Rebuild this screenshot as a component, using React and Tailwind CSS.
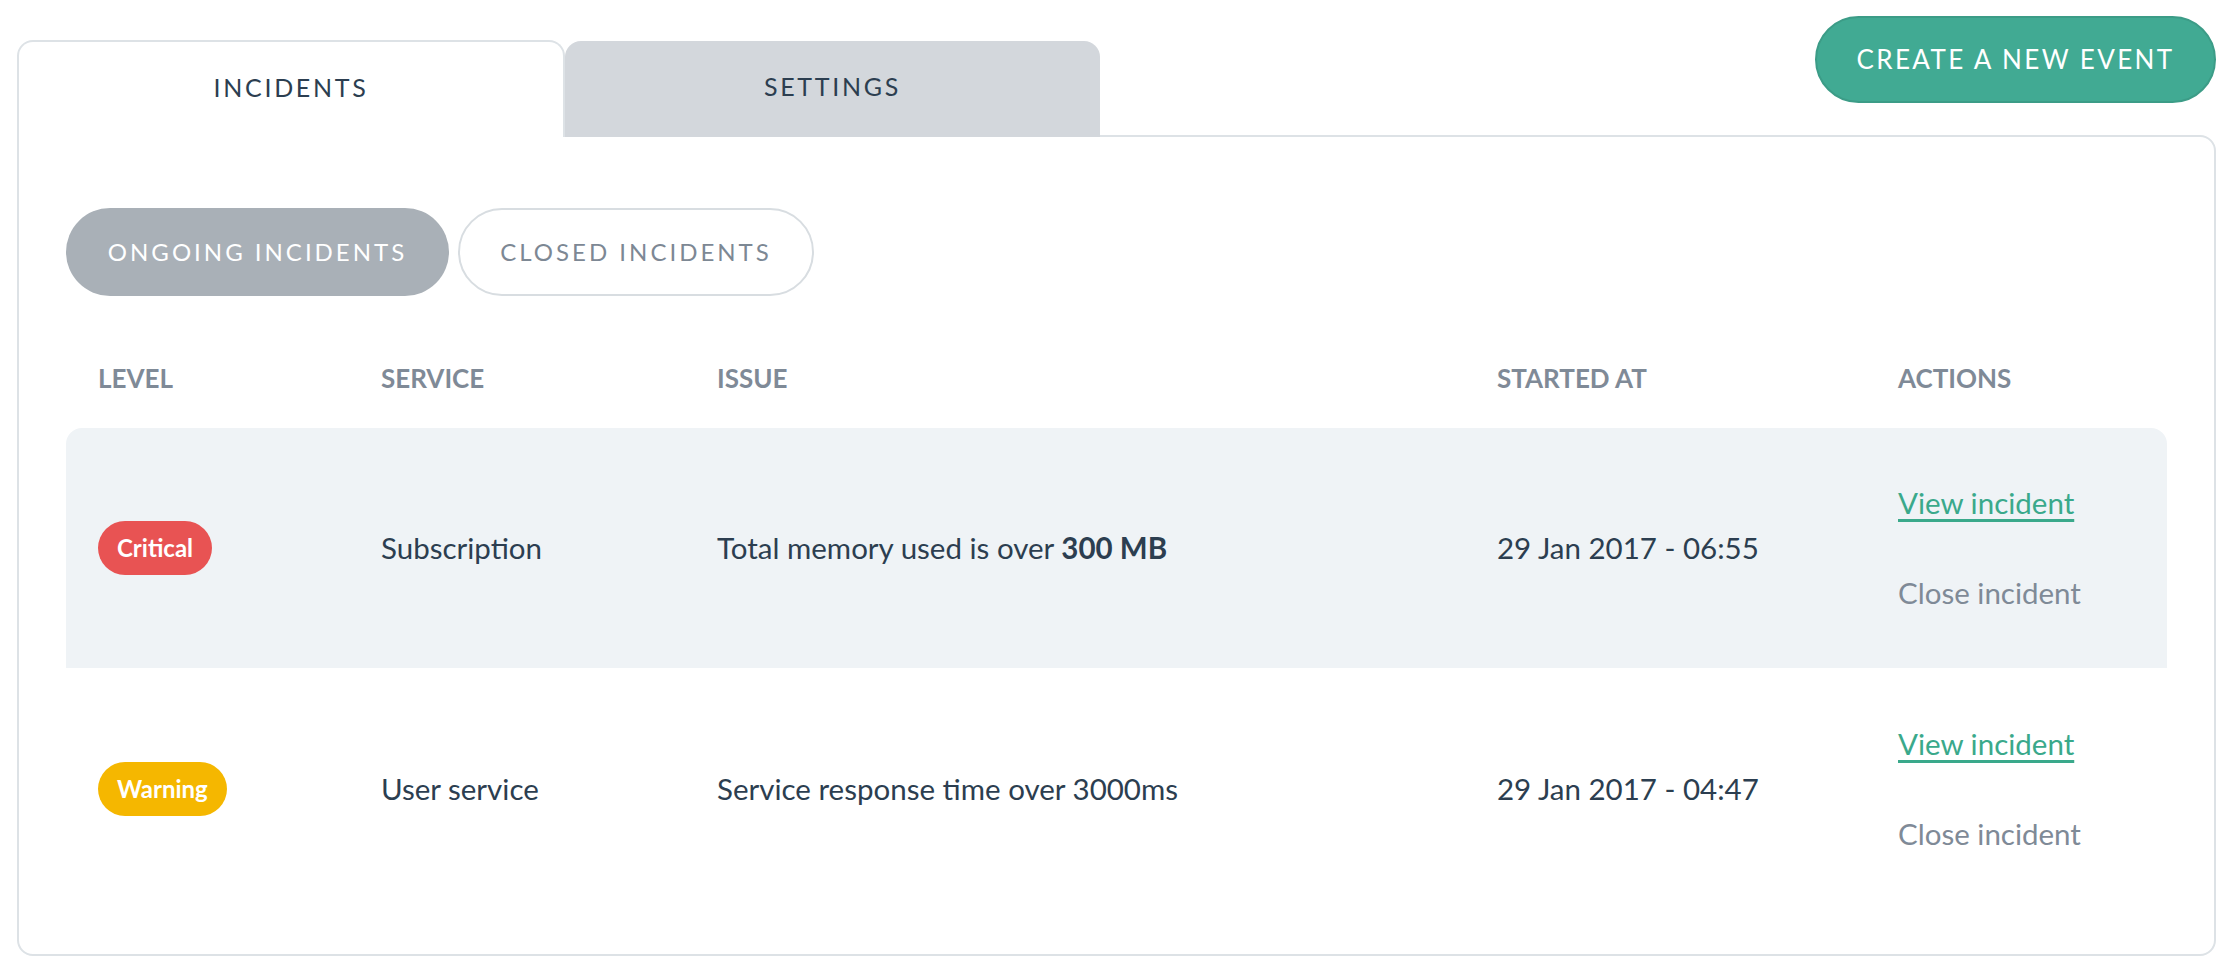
import React, { useState } from "react";

const incidents = [
  {
    id: 1,
    level: "Critical",
    service: "Subscription",
    issue: (
      <>
        Total memory used is over <span className="font-bold">300 MB</span>
      </>
    ),
    startedAt: "29 Jan 2017 - 06:55",
  },
  {
    id: 2,
    level: "Warning",
    service: "User service",
    issue: "Service response time over 3000ms",
    startedAt: "29 Jan 2017 - 04:47",
  },
];

const levelStyles = {
  Critical: "bg-[#e85353]",
  Warning: "bg-[#f5b700]",
};

const cols = "grid grid-cols-[283px_336px_780px_401px_1fr]";

const App = () => {
  const [tab, setTab] = useState("incidents");
  const [filter, setFilter] = useState("ongoing");

  return (
    <div className="min-h-screen bg-white pl-[17px] pr-[16px] pt-[16px] font-['Lato',sans-serif] text-[#2c3e50]">
      {/* tabs + create button */}
      <div className="flex items-end justify-between">
        <div className="relative z-10 -mb-[2px] flex items-end">
          <button
            onClick={() => setTab("incidents")}
            className="flex h-[97px] w-[548px] items-center justify-center rounded-t-[16px] border-2 border-b-0 border-[#dde2e6] bg-white pb-[4px] text-[25px] tracking-[2.7px] text-[#2c3e50]"
          >
            INCIDENTS
          </button>
          <button
            onClick={() => setTab("settings")}
            className="flex h-[96px] w-[535px] items-center justify-center rounded-t-[16px] bg-[#d3d7dc] pb-[4px] text-[25px] tracking-[2.7px] text-[#2c3e50]"
          >
            SETTINGS
          </button>
        </div>
        <button className="mb-[32px] h-[87px] w-[401px] rounded-full border-2 border-[#3c9c87] bg-[#41aa93] text-[26px] tracking-[2.4px] text-white">
          CREATE A NEW EVENT
        </button>
      </div>

      {/* panel */}
      <div className="rounded-tr-[16px] rounded-b-[16px] border-2 border-[#dde2e6] px-[47px] pt-[71px] pb-[44px]">
        {/* filter buttons */}
        <div className="flex gap-[9px]">
          <button
            onClick={() => setFilter("ongoing")}
            className={`h-[88px] w-[383px] rounded-full text-[24px] tracking-[3px] ${
              filter === "ongoing"
                ? "bg-[#a9b0b7] text-white"
                : "border-2 border-[#d8dde1] text-[#7d8894]"
            }`}
          >
            ONGOING INCIDENTS
          </button>
          <button
            onClick={() => setFilter("closed")}
            className={`h-[88px] w-[356px] rounded-full text-[24px] tracking-[3px] ${
              filter === "closed"
                ? "bg-[#a9b0b7] text-white"
                : "border-2 border-[#d8dde1] text-[#7d8894]"
            }`}
          >
            CLOSED INCIDENTS
          </button>
        </div>

        {/* table header */}
        <div className={`${cols} mt-[60px] h-[44px] items-center text-[26px] font-bold text-[#7f8a97]`}>
          <div className="pl-[32px]">LEVEL</div>
          <div className="pl-[32px]">SERVICE</div>
          <div className="pl-[32px]">ISSUE</div>
          <div className="pl-[32px]">STARTED AT</div>
          <div className="pl-[32px]">ACTIONS</div>
        </div>

        {/* rows */}
        <div className="mt-[28px]">
          {incidents.map((inc, i) => (
            <div
              key={inc.id}
              className={`${cols} items-center text-[29.5px] ${
                i === 0 ? "h-[240px] rounded-t-[16px] bg-[#eff3f6]" : "h-[242px]"
              }`}
            >
              <div className="pl-[32px]">
                <span
                  className={`inline-flex h-[54px] items-center rounded-full px-[19px] text-[24px] font-bold text-white ${levelStyles[inc.level]}`}
                >
                  {inc.level}
                </span>
              </div>
              <div className="pl-[32px]">{inc.service}</div>
              <div className="pl-[32px]">{inc.issue}</div>
              <div className="pl-[32px]">{inc.startedAt}</div>
              <div className="flex flex-col gap-[48px] pl-[32px] leading-[42px]">
                <a href="#" className="text-[#3aa98b] underline decoration-[3px] underline-offset-[5px]">
                  View incident
                </a>
                <a href="#" className="text-[#7f8a97]">
                  Close incident
                </a>
              </div>
            </div>
          ))}
        </div>
      </div>
    </div>
  );
};

export default App;
